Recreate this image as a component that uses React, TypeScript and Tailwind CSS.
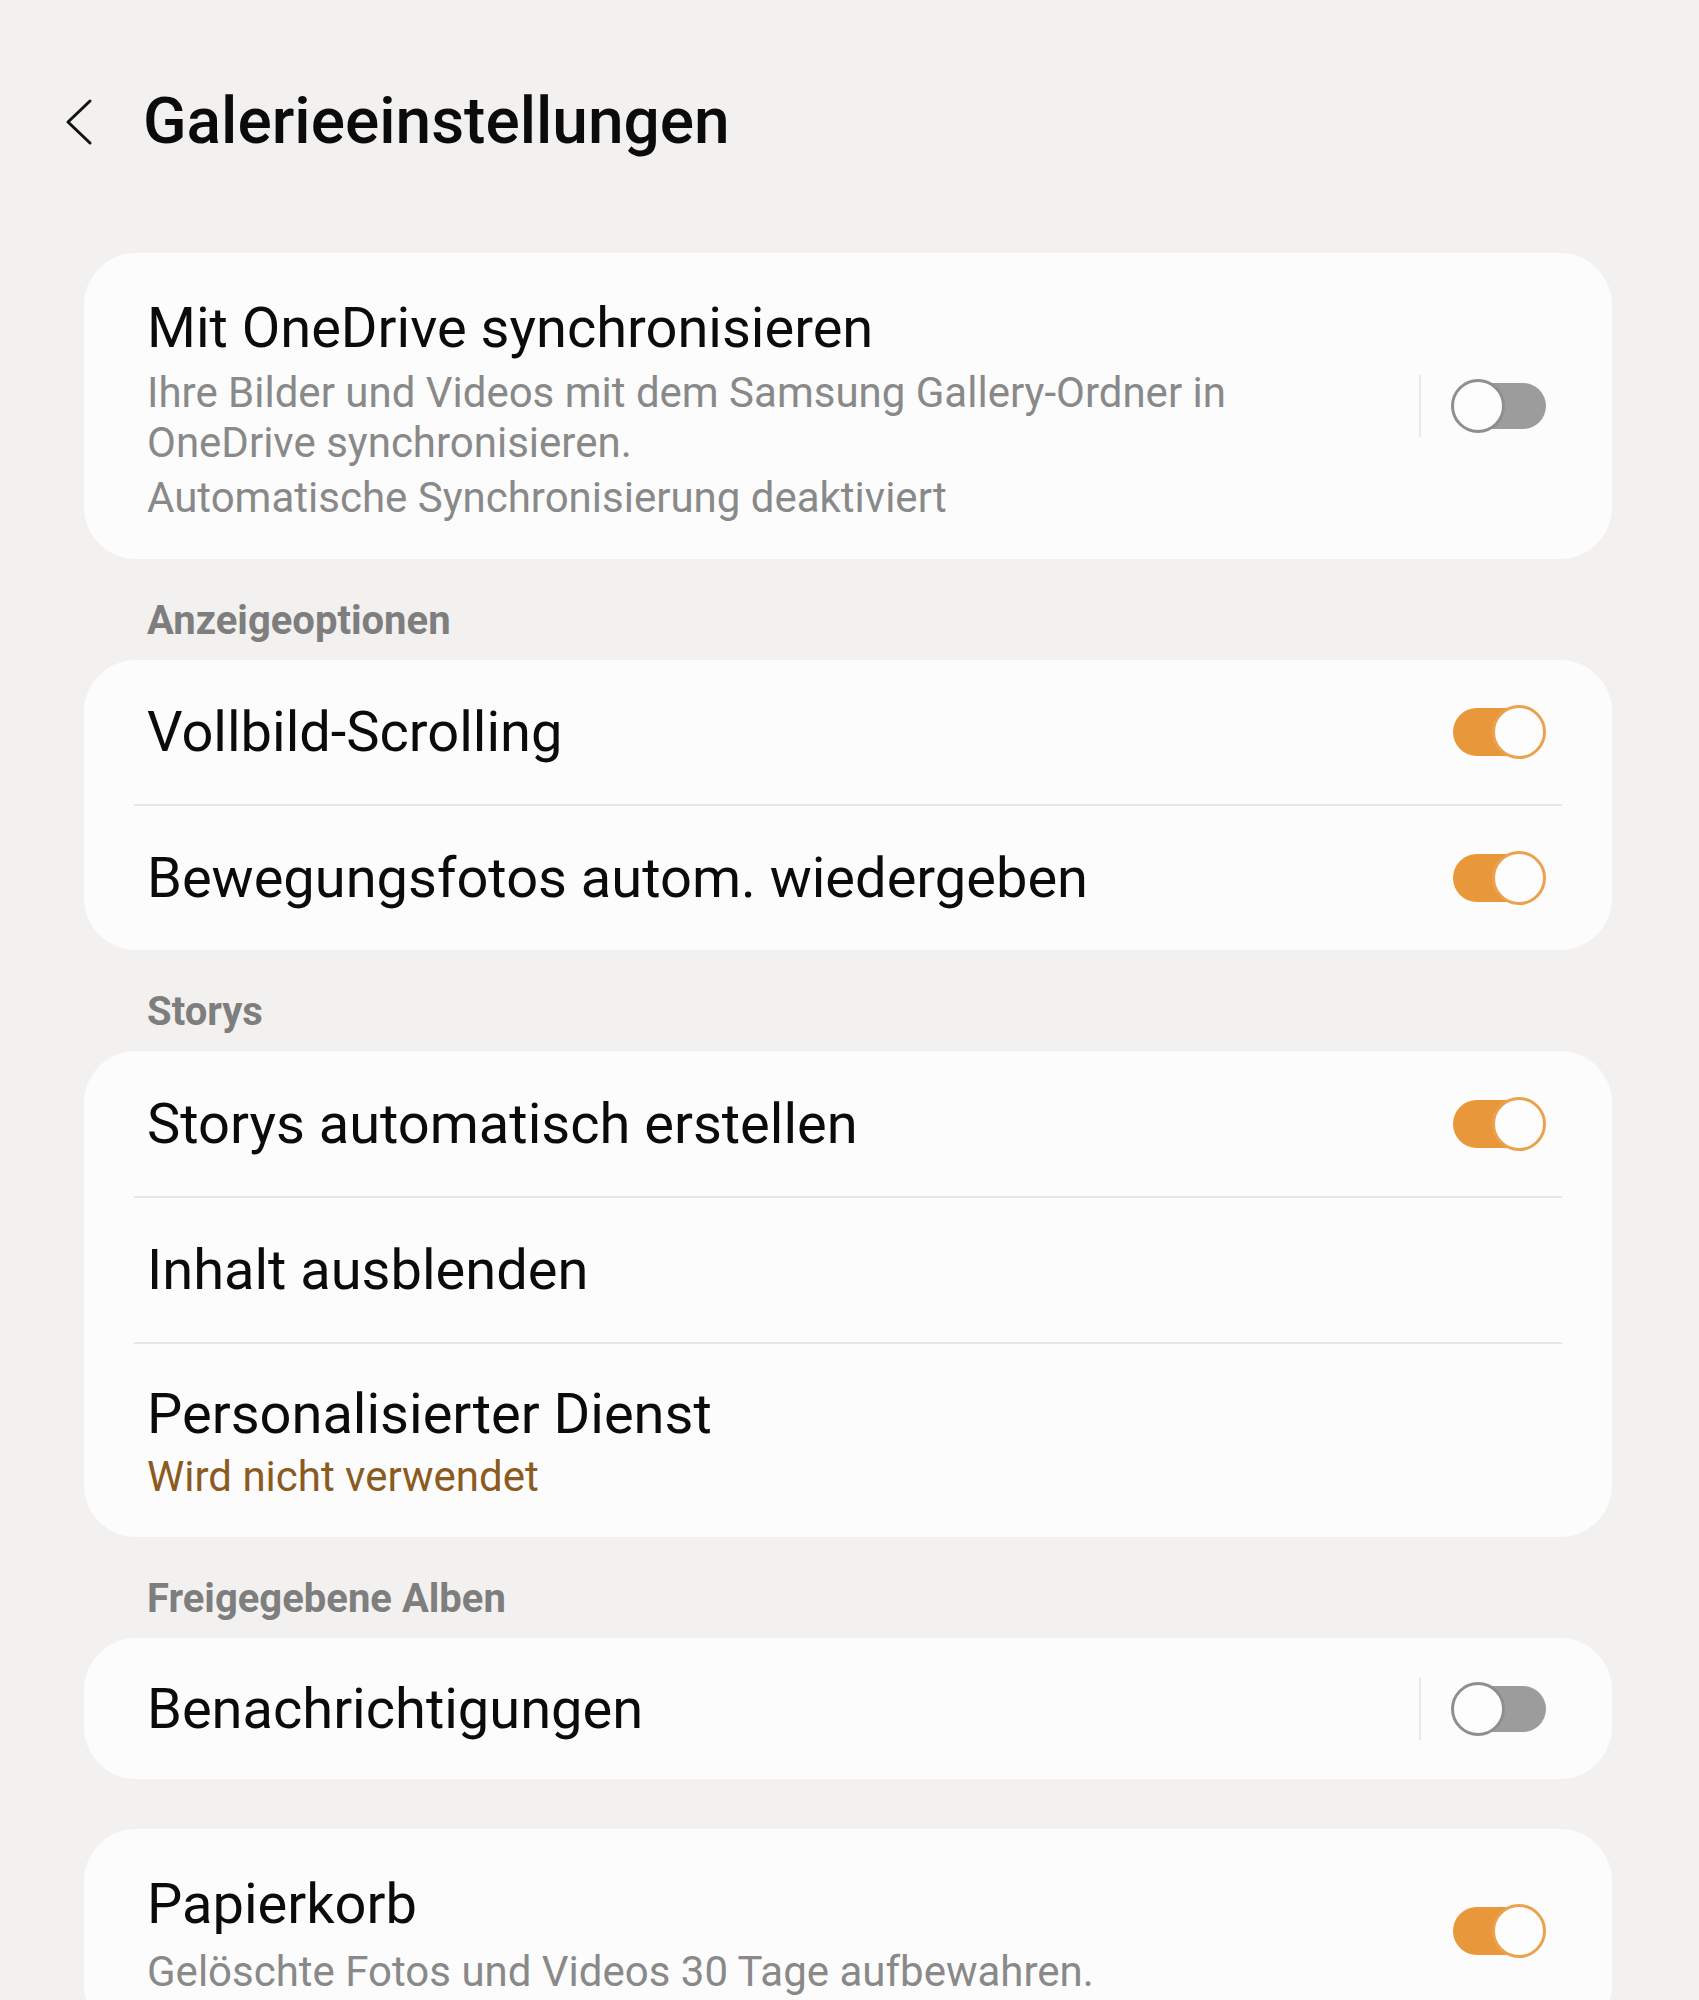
import React from "react";

function Toggle({ on }: { on: boolean }) {
  if (on) {
    return (
      <div className="relative h-[54px] w-[93px] shrink-0">
        <div className="absolute left-0 top-[3px] h-[48px] w-[80px] rounded-full bg-[#e8983a]" />
        <div className="absolute right-0 top-0 h-[54px] w-[54px] rounded-full border-[3px] border-[#eba24e] bg-[#fdfdfd]" />
      </div>
    );
  }
  return (
    <div className="relative h-[54px] w-[95px] shrink-0">
      <div className="absolute right-0 top-[4px] h-[46px] w-[76px] rounded-full bg-[#9c9c9c]" />
      <div className="absolute left-0 top-0 h-[54px] w-[54px] rounded-full border-[3px] border-[#8e8e8e] bg-[#fdfdfd]" />
    </div>
  );
}

function VDivider() {
  return <div className="mr-[30px] h-[62px] w-[2px] bg-[#e9e9e9]" />;
}

function HDivider() {
  return <div className="mx-[50px] h-[2px] bg-[#e6e6e6]" />;
}

function Title({ children }: { children: React.ReactNode }) {
  return <div className="text-[56px] leading-[66px] text-[#0b0b0b]">{children}</div>;
}

function SimpleRow({ title, h, toggle, off }: { title: string; h: string; toggle?: boolean; off?: boolean }) {
  return (
    <div className={`flex items-center justify-between pl-[63px] pr-[66px] ${h}`}>
      <Title>{title}</Title>
      {toggle !== undefined && (
        <div className="flex items-center">
          {off && <VDivider />}
          <Toggle on={toggle} />
        </div>
      )}
    </div>
  );
}

function Section({ children }: { children: React.ReactNode }) {
  return (
    <div className="ml-[147px] mt-[38px] mb-[15px] text-[40px] font-bold leading-[48px] text-[#7e7e7e]">
      {children}
    </div>
  );
}

function Card({ children, className = "" }: { children: React.ReactNode; className?: string }) {
  return <div className={`ml-[84px] mr-[87px] rounded-[52px] bg-[#fcfcfc] ${className}`}>{children}</div>;
}

export default function App() {
  return (
    <div className="min-h-[2000px] w-full overflow-hidden bg-[#f2f1ef] font-['Roboto','Noto_Sans',sans-serif]">
      <div className="flex h-[244px] items-center">
        <svg className="ml-[64px]" width="30" height="48" viewBox="0 0 30 48" fill="none">
          <polyline points="26,3 4,24 26,45" stroke="#111" strokeWidth="3" strokeLinecap="round" strokeLinejoin="round" />
        </svg>
        <div className="ml-[49px] text-[64px] font-medium leading-[76px] text-[#0b0b0b]">Galerieeinstellungen</div>
      </div>

      <Card className="mt-[9px]">
        <div className="flex items-center justify-between pl-[63px] pr-[66px] pt-[42px] pb-[36px]">
          <div className="w-[1150px]">
            <Title>Mit OneDrive synchronisieren</Title>
            <div className="mt-[7px] text-[42px] leading-[50px] text-[#898989]">
              Ihre Bilder und Videos mit dem Samsung Gallery-Ordner in OneDrive synchronisieren.
            </div>
            <div className="mt-[5px] text-[42px] leading-[50px] text-[#898989]">
              Automatische Synchronisierung deaktiviert
            </div>
          </div>
          <div className="mb-[6px] flex items-center">
            <VDivider />
            <Toggle on={false} />
          </div>
        </div>
      </Card>

      <Section>Anzeigeoptionen</Section>
      <Card>
        <SimpleRow title="Vollbild-Scrolling" h="h-[144px]" toggle={true} />
        <HDivider />
        <SimpleRow title="Bewegungsfotos autom. wiedergeben" h="h-[144px]" toggle={true} />
      </Card>

      <Section>Storys</Section>
      <Card>
        <SimpleRow title="Storys automatisch erstellen" h="h-[145px]" toggle={true} />
        <HDivider />
        <SimpleRow title="Inhalt ausblenden" h="h-[144px]" />
        <HDivider />
        <div className="pl-[63px] pr-[66px] pt-[37px] pb-[35px]">
          <Title>Personalisierter Dienst</Title>
          <div className="mt-[5px] text-[42px] leading-[50px] text-[#8b5a1f]">Wird nicht verwendet</div>
        </div>
      </Card>

      <Section>Freigegebene Alben</Section>
      <Card>
        <SimpleRow title="Benachrichtigungen" h="h-[141px]" toggle={false} off />
      </Card>

      <Card className="mt-[50px]">
        <div className="flex items-center justify-between pl-[63px] pr-[66px] pt-[42px] pb-[40px]">
          <div>
            <Title>Papierkorb</Title>
            <div className="mt-[10px] text-[42px] leading-[50px] text-[#898989]">
              Gelöschte Fotos und Videos 30 Tage aufbewahren.
            </div>
          </div>
          <div className="mb-[6px]">
            <Toggle on={true} />
          </div>
        </div>
      </Card>
    </div>
  );
}
